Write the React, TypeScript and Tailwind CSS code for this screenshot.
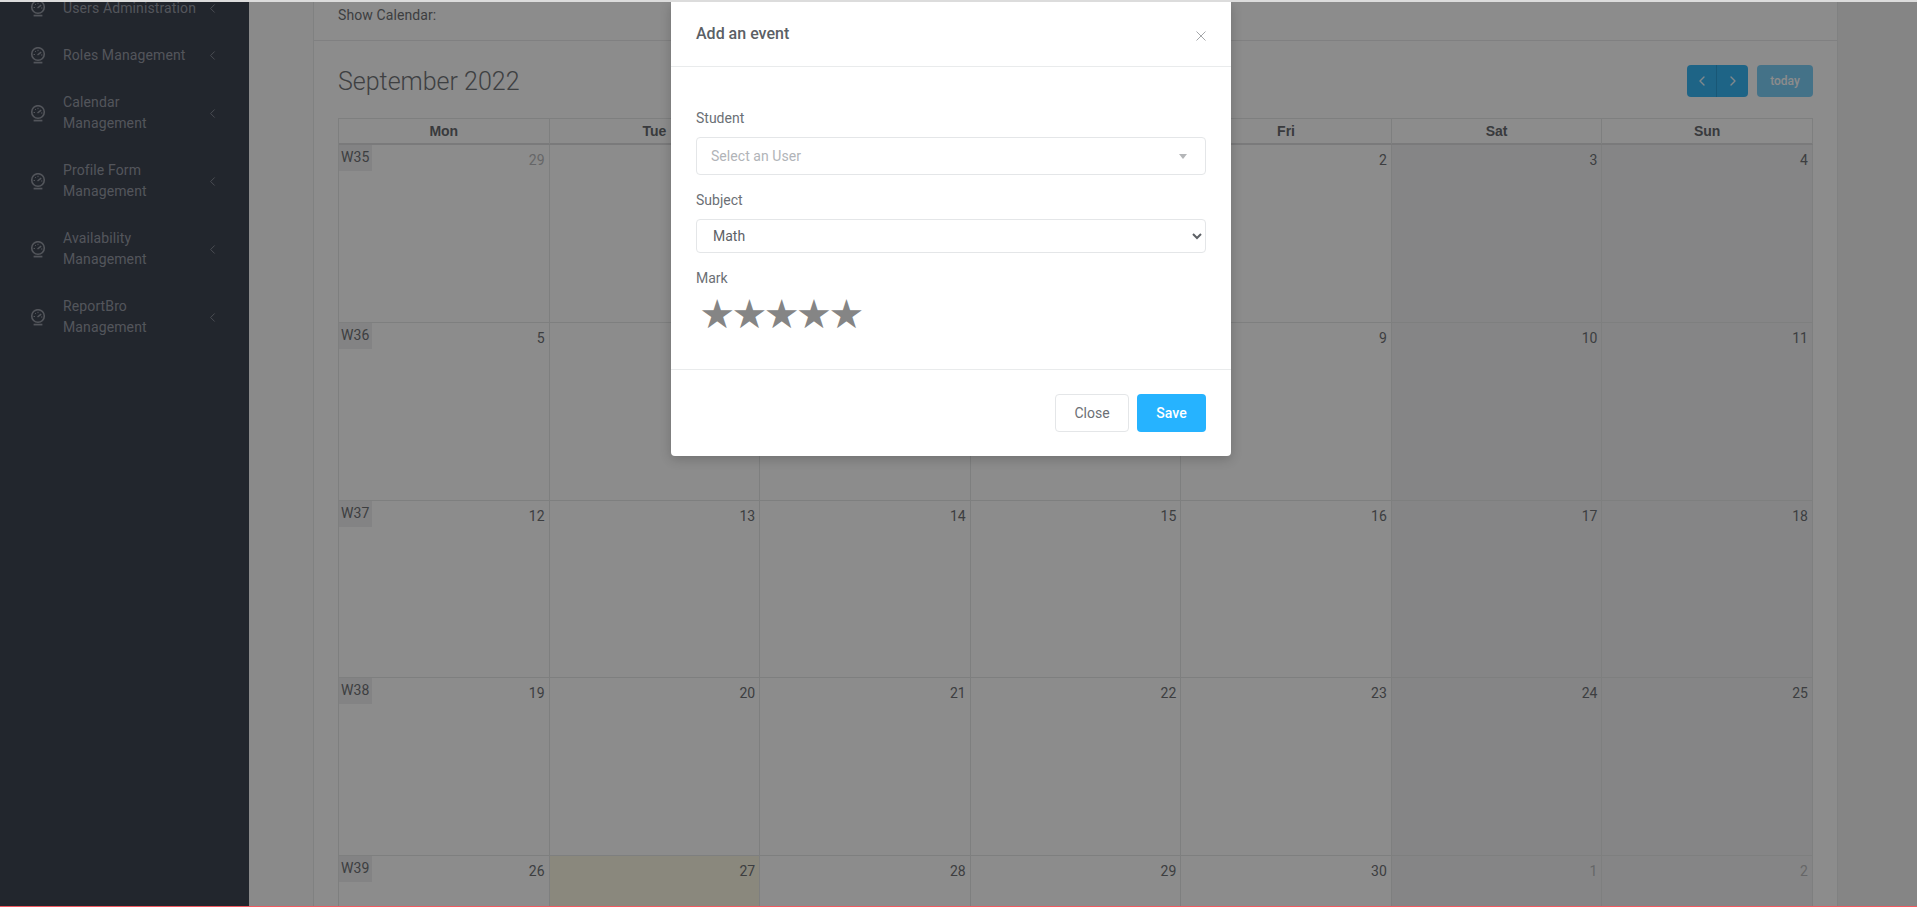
import { ChevronLeft, ChevronRight } from 'lucide-react';

const menuItems = [
  ['Users Administration'],
  ['Roles Management'],
  ['Calendar', 'Management'],
  ['Profile Form', 'Management'],
  ['Availability', 'Management'],
  ['ReportBro', 'Management'],
];

const dayNames = ['Mon', 'Tue', 'Wed', 'Thu', 'Fri', 'Sat', 'Sun'];

type Day = { n: number; muted?: boolean; today?: boolean };

const weeks: { label: string; days: Day[] }[] = [
  {
    label: 'W35',
    days: [{ n: 29, muted: true }, { n: 30, muted: true }, { n: 31, muted: true }, { n: 1 }, { n: 2 }, { n: 3 }, { n: 4 }],
  },
  { label: 'W36', days: [{ n: 5 }, { n: 6 }, { n: 7 }, { n: 8 }, { n: 9 }, { n: 10 }, { n: 11 }] },
  { label: 'W37', days: [{ n: 12 }, { n: 13 }, { n: 14 }, { n: 15 }, { n: 16 }, { n: 17 }, { n: 18 }] },
  { label: 'W38', days: [{ n: 19 }, { n: 20 }, { n: 21 }, { n: 22 }, { n: 23 }, { n: 24 }, { n: 25 }] },
  {
    label: 'W39',
    days: [{ n: 26 }, { n: 27, today: true }, { n: 28 }, { n: 29 }, { n: 30 }, { n: 1, muted: true }, { n: 2, muted: true }],
  },
];

function GaugeIcon() {
  return (
    <svg width="16" height="17" viewBox="0 0 16 17" fill="none" stroke="currentColor" className="shrink-0">
      <circle cx="8" cy="7" r="6.3" strokeWidth="1.6" />
      <path d="M7.5 8 L11.2 5.2" strokeWidth="1.5" />
      <path d="M3.6 7.5 h1.4 M5 4 l.9 .9 M8 2.8 v1.3 M12.4 8 h-1.4" strokeWidth="1" />
      <path d="M3.6 15.6 h8.8" strokeWidth="1.7" />
    </svg>
  );
}

function Sidebar() {
  return (
    <aside className="w-[249px] shrink-0 overflow-hidden bg-[#3f4553] text-[#979ca6]">
      <ul className="-mt-[17px]">
        {menuItems.map((lines) => (
          <li
            key={lines[0]}
            className={`flex items-center pl-[30px] pr-[29px] ${lines.length > 1 ? 'h-[68px]' : 'h-[47px]'}`}
          >
            <GaugeIcon />
            <span className="ml-[17px] flex-1 text-[14px] leading-[21px] tracking-[0.12px] whitespace-nowrap">
              {lines.map((l) => (
                <div key={l}>{l}</div>
              ))}
            </span>
            <ChevronLeft size={15} strokeWidth={1.5} className="shrink-0 text-[#8b909a]" />
          </li>
        ))}
      </ul>
    </aside>
  );
}

function Calendar() {
  return (
    <div className="px-[24px] pt-[24px]">
      <div className="flex items-center justify-between h-[32px] mb-[21px]">
        <h2 className="text-[25px] font-light leading-none text-[#727579]">September 2022</h2>
        <div className="flex">
          <div className="flex h-[32px] rounded-[4px] overflow-hidden bg-[#38b6f5] text-white/90">
            <button className="w-[30px] flex items-center justify-center border-r border-[#2e9fd8]">
              <ChevronLeft size={16} strokeWidth={2} />
            </button>
            <button className="w-[31px] flex items-center justify-center">
              <ChevronRight size={16} strokeWidth={2} />
            </button>
          </div>
          <button className="ml-[9px] w-[56px] h-[32px] rounded-[4px] bg-[#38b6f5] opacity-65 text-white text-[12px] font-medium">
            today
          </button>
        </div>
      </div>

      <div className="border-l border-t border-[#e6e7e8]">
        <div className="grid grid-cols-7 h-[26px] border-b-2 border-[#dedfe0]">
          {dayNames.map((d) => (
            <div
              key={d}
              className="border-r border-[#e6e7e8] text-center text-[14px] font-bold leading-[25px] text-[#686b6f] font-['Liberation_Sans',sans-serif]"
            >
              {d}
            </div>
          ))}
        </div>
        {weeks.map((w) => (
          <div key={w.label} className="grid grid-cols-7 h-[177.75px] border-b border-[#e6e7e8]">
            {w.days.map((d, i) => (
              <div
                key={i}
                className={`border-r border-[#e6e7e8] ${
                  d.today ? 'bg-[#fcf8e3]' : i >= 5 ? 'bg-[#f2f3f4]' : ''
                }`}
              >
                {i === 0 && (
                  <span className="float-left h-[26px] w-[33px] pl-[2px] bg-[#efeff0] text-[14px] leading-[24px] tracking-[0.1px] text-[#6f7276]">
                    {w.label}
                  </span>
                )}
                <div
                  className={`pt-[5px] pr-[4px] text-right text-[14px] leading-[21px] ${
                    d.muted ? 'text-[#babbbd]' : 'text-[#6f7276]'
                  }`}
                >
                  {d.n}
                </div>
              </div>
            ))}
          </div>
        ))}
      </div>
    </div>
  );
}

function EventModal() {
  return (
    <div className="absolute left-[671px] top-0 w-[560px] rounded-b-[4px] bg-white shadow-[0_3px_12px_rgba(0,0,0,0.2)] text-[14px] text-[#6b6f75]">
      <div className="relative h-[65px] border-b border-[#e9ebec] px-[25px]">
        <h5 className="pt-[21px] text-[16px] leading-[22px] font-medium text-[#5b5f65]">Add an event</h5>
        <svg width="10" height="10" viewBox="0 0 10 10" className="absolute right-[25px] top-[29px] stroke-[#a5a7aa]">
          <path d="M0.5 0.5 L9.5 9.5 M9.5 0.5 L0.5 9.5" strokeWidth="1" />
        </svg>
      </div>

      <div className="h-[303px] px-[25px] pt-[41px] border-b border-[#e9ebec]">
        <label className="block leading-[21px]">Student</label>
        <div className="mt-[8px] flex items-center justify-between h-[38px] rounded-[4px] border border-[#e4e6e8] pl-[14px] pr-[18px] text-[#b1b4b8]">
          <span className="tracking-[0.05px]">Select an User</span>
          <span className="border-x-[4px] border-t-[5px] border-x-transparent border-t-[#b4b6b8]" />
        </div>

        <label className="block mt-[15px] leading-[21px]">Subject</label>
        <select
          defaultValue="Math"
          className="mt-[8px] block w-full h-[34px] rounded-[4px] border border-[#e4e6e8] bg-white px-[12px] text-[14px] text-[#5d6166]"
        >
          <option>Math</option>
        </select>

        <label className="block mt-[15px] leading-[21px]">Mark</label>
        <div className="mt-[2px] pl-[5px] flex text-[40px] leading-[46px] text-[#858585] font-['DejaVu_Sans',sans-serif]">
          {[0, 1, 2, 3, 4].map((i) => (
            <span key={i} className="w-[32.3px] flex justify-center">
              ★
            </span>
          ))}
        </div>
      </div>

      <div className="flex justify-end gap-[8px] px-[25px] pt-[24px] pb-[24px]">
        <button className="h-[38px] w-[74px] rounded-[4px] border border-[#e4e6e8] text-[#6b6f75]">Close</button>
        <button className="h-[38px] w-[69px] rounded-[4px] bg-[#26b3ff] font-medium text-white">Save</button>
      </div>
    </div>
  );
}

export default function App() {
  return (
    <div className="flex h-[907px] flex-col overflow-hidden font-[Roboto,sans-serif]">
      <div className="h-[2px] shrink-0 bg-[#dcdcdc]" />
      <div className="relative flex flex-1 overflow-hidden bg-[#f2f2f3]">
        <Sidebar />
        <main className="flex-1 bg-[#fbfbfc] pl-[64px] mr-[79px]">
          <div className="h-[940px] border-x border-[#eaebec] bg-white">
            <div className="h-[39px] border-b border-[#e9eaeb] px-[24px] text-[14px] leading-[26px] tracking-[0.1px] text-[#6f7276]">
              Show Calendar:
            </div>
            <Calendar />
          </div>
        </main>
        <div className="absolute inset-0 bg-black/45" />
        <EventModal />
      </div>
      <div className="h-[1px] shrink-0 bg-[#f05a60]" />
    </div>
  );
}
